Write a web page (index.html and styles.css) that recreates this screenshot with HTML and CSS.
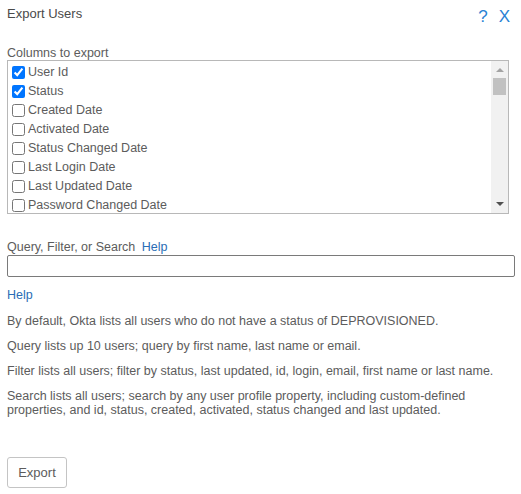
FILE: index.html
```html
<!DOCTYPE html>
<html>
<head>
<meta charset="utf-8">
<link rel="stylesheet" href="styles.css">
</head>
<body>
<div class="dialog">
  <div class="header">
    <div class="title">Export Users</div>
    <div class="actions">
      <span class="icon-help">?</span>
      <span class="icon-close">X</span>
    </div>
  </div>

  <div class="field-label cols-label">Columns to export</div>
  <div class="listbox">
    <div class="list">
      <label class="item"><input type="checkbox" checked>User Id</label>
      <label class="item"><input type="checkbox" checked>Status</label>
      <label class="item"><input type="checkbox">Created Date</label>
      <label class="item"><input type="checkbox">Activated Date</label>
      <label class="item"><input type="checkbox">Status Changed Date</label>
      <label class="item"><input type="checkbox">Last Login Date</label>
      <label class="item"><input type="checkbox">Last Updated Date</label>
      <label class="item"><input type="checkbox">Password Changed Date</label>
    </div>
    <div class="scrollbar">
      <div class="arrow-up"></div>
      <div class="thumb"></div>
      <div class="track"></div>
      <div class="arrow-down"></div>
    </div>
  </div>

  <div class="field-label query-label">Query, Filter, or Search <a class="link" href="#">Help</a></div>
  <input class="query-input" type="text">

  <div class="help-link"><a class="link" href="#">Help</a></div>

  <p class="note first">By default, Okta lists all users who do not have a status of DEPROVISIONED.</p>
  <p class="note">Query lists up 10 users; query by first name, last name or email.</p>
  <p class="note">Filter lists all users; filter by status, last updated, id, login, email, first name or last name.</p>
  <p class="note">Search lists all users; search by any user profile property, including custom-defined properties, and id, status, created, activated, status changed and last updated.</p>

  <button class="export-btn" type="button">Export</button>
</div>
</body>
</html>
```

FILE: styles.css
```css
html, body {
  margin: 0;
  padding: 0;
  background: #ffffff;
}

body {
  font-family: "Liberation Sans", Arial, sans-serif;
  font-size: 12.5px;
  color: #5c5c5c;
}

.dialog {
  padding: 6px 7px 0 7px;
  width: 507px;
}

.header {
  display: flex;
  justify-content: space-between;
  align-items: flex-start;
  height: 16px;
}

.title {
  font-size: 13px;
  line-height: 16px;
  color: #4a4a4a;
}

.actions {
  display: flex;
  gap: 11px;
  margin-right: 4px;
  margin-top: 2px;
  font-size: 17px;
  line-height: 18px;
  color: #2a82d4;
}

.field-label {
  line-height: 14px;
}

.cols-label {
  margin-top: 24px;
}

.listbox {
  display: flex;
  width: 500px;
  height: 152px;
  border: 1px solid #b8b8b8;
  overflow: hidden;
}

.list {
  flex: 1;
  padding-top: 2px;
  overflow: hidden;
}

.item {
  display: flex;
  align-items: center;
  height: 19px;
  line-height: 19px;
  color: #5c5c5c;
}

.item input {
  width: 13px;
  height: 13px;
  margin: 0 3px 0 4px;
}

.scrollbar {
  width: 17px;
  display: flex;
  flex-direction: column;
  align-items: center;
  background: #f1f1f1;
}

.arrow-up {
  width: 0;
  height: 0;
  margin-top: 7px;
  border-left: 4px solid transparent;
  border-right: 4px solid transparent;
  border-bottom: 4px solid #a3a3a3;
}

.thumb {
  width: 13px;
  height: 17px;
  margin-top: 6px;
  background: #c1c1c1;
}

.track {
  flex: 1;
}

.arrow-down {
  width: 0;
  height: 0;
  margin-bottom: 7px;
  border-left: 4px solid transparent;
  border-right: 4px solid transparent;
  border-top: 4px solid #505050;
}

.query-label {
  margin-top: 26px;
}

.link {
  color: #2a6db5;
  text-decoration: none;
  margin-left: 3px;
}

.query-input {
  display: block;
  box-sizing: border-box;
  width: 508px;
  height: 22px;
  margin: 1px 0 0 0;
  padding: 0 4px;
  border: 1px solid #7a7a7a;
  border-radius: 2px;
  font-family: inherit;
  font-size: 13px;
}

.help-link {
  margin-top: 11px;
  line-height: 14px;
}

.help-link .link {
  margin-left: 0;
}

.note {
  margin: 11px 0 0 0;
  line-height: 14px;
}

.note.first {
  margin-top: 12px;
}

.export-btn {
  display: block;
  margin-top: 40px;
  width: 60px;
  height: 31px;
  padding: 0;
  background: #ffffff;
  border: 1px solid #c4c4c4;
  border-radius: 3px;
  font-family: inherit;
  font-size: 13px;
  color: #5c5c5c;
}
```
